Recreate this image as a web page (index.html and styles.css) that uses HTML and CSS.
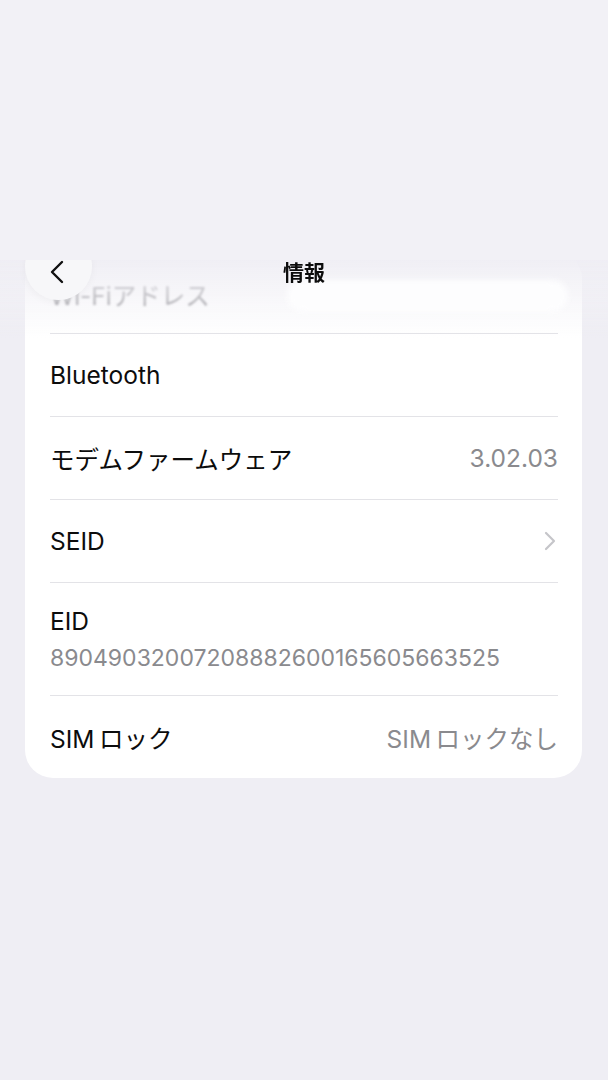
FILE: index.html
```html
<!DOCTYPE html>
<html lang="ja">
<head>
    <meta charset="UTF-8">
    <meta name="viewport" content="width=device-width, initial-scale=1.0">
    <title>情報</title>
    <link rel="stylesheet" href="styles.css">
</head>
<body>
    <div class="top-area"></div>
    <div class="screen">
        <div class="card">
            <div class="row row-faded">
                <span class="label">Wi-Fiアドレス</span>
            </div>
            <div class="row">
                <span class="label">Bluetooth</span>
            </div>
            <div class="row">
                <span class="label">モデムファームウェア</span>
                <span class="value">3.02.03</span>
            </div>
            <div class="row">
                <span class="label">SEID</span>
                <svg class="chevron" width="12" height="20" viewBox="0 0 12 20">
                    <path d="M2 2 L10 10 L2 18" fill="none" stroke="#c5c5c9" stroke-width="2.2" stroke-linecap="round" stroke-linejoin="round"/>
                </svg>
            </div>
            <div class="row row-stack">
                <span class="label">EID</span>
                <span class="sub">89049032007208882600165605663525</span>
            </div>
            <div class="row">
                <span class="label">SIM&#8201;ロック</span>
                <span class="value">SIM&#8201;ロックなし</span>
            </div>
        </div>

        <!-- nav bar sits over the scrolled list -->
        <div class="nav-fade"></div>
        <div class="redact"></div>
        <div class="back-btn">
            <svg width="20" height="26" viewBox="0 0 20 26">
                <path d="M15 3 L5 13 L15 23" fill="none" stroke="#111" stroke-width="2.4" stroke-linecap="round" stroke-linejoin="round"/>
            </svg>
        </div>
        <div class="nav-title">情報</div>
    </div>
</body>
</html>
```

FILE: styles.css
```css
body {
    margin: 0;
    background-color: #efeef4;
    font-family: "Inter", "Noto Sans CJK JP", sans-serif;
    color: #0c0c0c;
}
.top-area {
    height: 260px;
    background-color: #f2f1f6;
}
.screen {
    position: relative;
    height: 820px;
    overflow: hidden;
}
.card {
    margin: -9px 26px 0 25px;
    padding: 0 24px 0 25px;
    background: #fff;
    border-radius: 28px;
}
.row {
    display: flex;
    justify-content: space-between;
    align-items: center;
    min-height: 82px;
    border-bottom: 1px solid #e3e3e7;
    font-size: 24.5px;
}
.row:last-child {
    border-bottom: none;
}
.row-faded .label {
    color: #7c7c80;
    filter: blur(1px);
    padding-top: 4px;
}
.row-stack {
    flex-direction: column;
    align-items: flex-start;
    justify-content: center;
    min-height: 112px;
    gap: 8px;
}
.value {
    color: #8a8a8e;
}
.sub {
    color: #8a8a8e;
    font-size: 23px;
}
.chevron {
    margin-right: 2px;
}
.nav-fade {
    position: absolute;
    top: 0;
    left: 0;
    right: 0;
    height: 78px;
    background: linear-gradient(to bottom, rgba(239,238,244,0.95) 0%, rgba(242,241,246,0.6) 45%, rgba(255,255,255,0) 100%);
    backdrop-filter: blur(0.6px);
}
.redact {
    position: absolute;
    top: 20px;
    left: 287px;
    width: 281px;
    height: 32px;
    border-radius: 16px;
    background: #fdfdfe;
    filter: blur(3px);
}
.back-btn {
    position: absolute;
    top: -27px;
    left: 25px;
    width: 67px;
    height: 67px;
    border-radius: 50%;
    background: #f7f7f9;
    box-shadow: 0 2px 8px rgba(0,0,0,0.04);
    display: flex;
    justify-content: center;
    align-items: center;
}
.back-btn svg {
    margin: 10px 4px 0 0;
}
.nav-title {
    position: absolute;
    top: 0;
    left: 0;
    right: 0;
    text-align: center;
    font-size: 21px;
    font-weight: bold;
    line-height: 26px;
}
```
